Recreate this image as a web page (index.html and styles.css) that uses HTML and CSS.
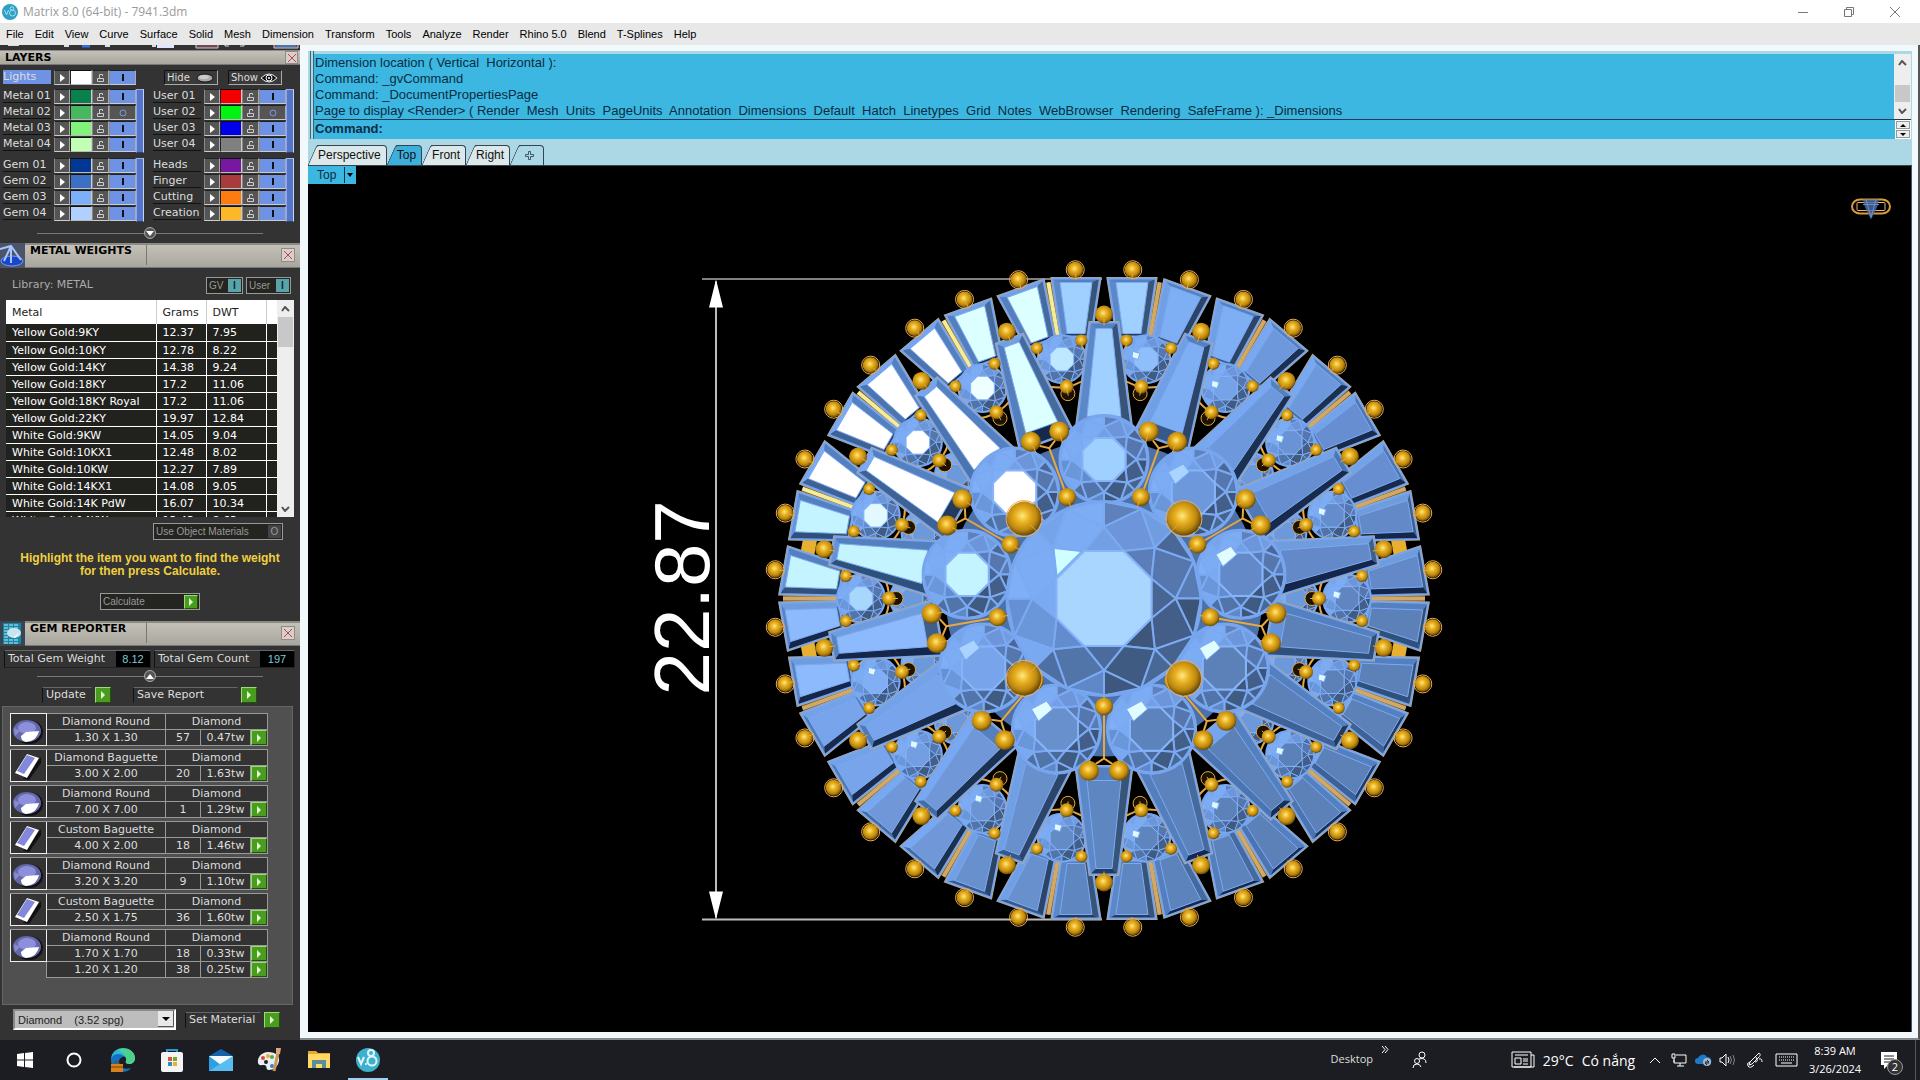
FILE: index.html
```html
<!doctype html>
<html lang="en">
  <head>
    <meta charset="UTF-8" />
    <meta name="viewport" content="width=device-width, initial-scale=1.0" />
    <title>Matrix 8.0 (64-bit) - 7941.3dm</title>
    <link rel="stylesheet" href="styles.css">
  </head>
  <body>
    <header class="titlebar">
      <svg class="app-icon" viewBox="0 0 16 16"><circle cx="8" cy="8" r="8" fill="#2f9fc4"/><circle cx="10.5" cy="9" r="3" fill="none" stroke="#9fe0f2"/><circle cx="10" cy="4.5" r="1.8" fill="none" stroke="#9fe0f2"/><path d="M2.5 6l2 5 2-5" fill="none" stroke="#9fe0f2"/></svg>
      <span class="title">Matrix 8.0 (64-bit) - 7941.3dm</span>
      <div class="window-buttons">
        <button aria-label="Minimize"><svg width="12" height="12"><path d="M1 6.500h10"/></svg></button>
        <button aria-label="Restore"><svg width="12" height="12"><path d="M1.500 3.500h7v7h-7zM3.500 3.500v-2h7v7h-2"/></svg></button>
        <button aria-label="Close"><svg width="12" height="12"><path d="M1 1l10 10M11 1L1 11"/></svg></button>
      </div>
    </header>

    <nav class="menubar">
      <button>File</button><button>Edit</button><button>View</button><button>Curve</button><button>Surface</button><button>Solid</button><button>Mesh</button><button>Dimension</button><button>Transform</button><button>Tools</button><button>Analyze</button><button>Render</button><button>Rhino 5.0</button><button>Blend</button><button>T-Splines</button><button>Help</button>
    </nav>

    <div class="workspace">
      <aside class="dock">
        <svg class="dock-strip" width="300" height="5"><path d="M8 0h11M64 1h5M105 1h5M152 1h4" stroke="#ddd" stroke-width="2"/><path d="M82 1h8" stroke="#3a6ae0" stroke-width="3"/><path d="M157 0h17v3h-17z" fill="#dfe6ff"/><path d="M196 0v3h22V0M274 0v3h24V0" fill="#704858" stroke="#ccc"/><path d="M276 1h20" stroke="#3f78b8" stroke-width="2"/><path d="M225 0v1h4M240 1h4V0" stroke="#ddd" fill="none"/></svg>

        <section class="layers">
          <div class="panel-head slim">
            <h2>LAYERS</h2>
            <button class="close" aria-label="Close Layers"></button>
          </div>
          <div class="layers-top">
            <div class="layer-row" id="lights"></div>
            <button class="bevel-btn">Hide <svg width="18" height="10"><ellipse cx="9" cy="5" rx="8" ry="4" fill="#aaa" stroke="#111"/><ellipse cx="8" cy="4" rx="5" ry="2" fill="#ccc"/></svg></button>
            <button class="bevel-btn">Show <svg width="18" height="10"><path d="M1 5q8-8 16 0q-8 8-16 0z" fill="#111" stroke="#eee"/><circle cx="9" cy="5" r="3" fill="#111" stroke="#fff"/><circle cx="9" cy="5" r="1" fill="#fff"/></svg></button>
          </div>
          <div class="layer-grid" id="layerGrid"></div>
          <div class="slider"><button aria-label="Expand layers"><svg width="8" height="5"><path d="M0 0h8l-4 5z" fill="#fff"/></svg></button></div>
        </section>

        <section class="metal">
          <div class="panel-head">
            <svg class="head-icon" width="25" height="25"><rect width="25" height="25" fill="#4b5468"/><ellipse cx="12" cy="18" rx="11" ry="5" fill="#1c46c8" stroke="#6f9cff"/><path d="M0 6l11-3 10 14M11 3L4 18M11 3v17" fill="none" stroke="#a8c4ff" stroke-width="2"/></svg>
            <h2>METAL WEIGHTS</h2>
            <button class="close" aria-label="Close Metal Weights"></button>
          </div>
          <div class="library">
            <span>Library: METAL</span>
            <button class="switch">GV <i>I</i></button>
            <button class="switch">User <i>I</i></button>
          </div>
          <div class="metal-list">
            <table>
              <thead><tr><th>Metal</th><th>Grams</th><th>DWT</th><th></th></tr></thead>
              <tbody id="metals"></tbody>
            </table>
            <div class="scrollbar">
              <button aria-label="Scroll up"><svg width="9" height="6"><path d="M1 5l3-4 4 4"/></svg></button>
              <div class="thumb"></div>
              <button aria-label="Scroll down"><svg width="9" height="6"><path d="M1 1l3 4 4-4"/></svg></button>
            </div>
          </div>
          <button class="switch off use-materials">Use Object Materials <i>O</i></button>
          <p class="hint">Highlight the item you want to find the weight<br>for then press Calculate.</p>
          <button class="switch calc">Calculate <span class="go"></span></button>
        </section>

        <section class="gems">
          <div class="panel-head">
            <svg class="head-icon" width="25" height="25"><rect width="25" height="25" fill="#3c4450"/><rect x="3" y="2" width="18" height="21" fill="#1787a8"/><path d="M4 4h15M4 7h15M4 10h5M4 13h4M4 16h5M4 19h15M4 22h15" stroke="#bdeef8" stroke-dasharray="4 1"/><ellipse cx="14" cy="12" rx="7" ry="5" fill="#c8e4f0"/><path d="M8 12l6 4 6-5-5 6z" fill="#fff"/></svg>
            <h2>GEM REPORTER</h2>
            <button class="close" aria-label="Close Gem Reporter"></button>
          </div>
          <div class="totals">
            <div><span>Total Gem Weight</span><output>8.12</output></div>
            <div><span>Total Gem Count</span><output>197</output></div>
          </div>
          <div class="slider"><button aria-label="Collapse report"><svg width="8" height="5"><path d="M0 5h8l-4-5z" fill="#fff"/></svg></button></div>
          <div class="report-actions">
            <button class="action update"><span>Update</span><span class="go"></span></button>
            <button class="action save"><span>Save Report</span><span class="go"></span></button>
          </div>
          <div class="gem-list"><table id="gems"></table></div>
          <div class="material">
            <div class="select-wrap">
              <select aria-label="Material"><option>Diamond &nbsp;&nbsp; (3.52 spg)</option></select>
              <svg class="select-arrow" width="16" height="16"><rect x="0" y="0" width="16" height="16" fill="#e8e8e8"/><path d="M15.500 0v15.500H0" fill="none" stroke="#555"/><path d="M4 6h8l-4 4z" fill="#000"/></svg>
            </div>
            <button class="action"><span>Set Material</span><span class="go"></span></button>
          </div>
        </section>
      </aside>

      <main class="stage">
        <div class="command">
          <div class="history">
            <div class="log">
              <p>Dimension location ( Vertical&nbsp; Horizontal ):</p>
              <p>Command: _gvCommand</p>
              <p>Command: _DocumentPropertiesPage</p>
              <p>Page to display &lt;Render&gt; ( Render&nbsp; Mesh&nbsp; Units&nbsp; PageUnits&nbsp; Annotation&nbsp; Dimensions&nbsp; Default&nbsp; Hatch&nbsp; Linetypes&nbsp; Grid&nbsp; Notes&nbsp; WebBrowser&nbsp; Rendering&nbsp; SafeFrame ): _Dimensions</p>
            </div>
            <div class="scrollbar">
              <button aria-label="Scroll up"><svg width="9" height="6"><path d="M1 5l3-4 4 4"/></svg></button>
              <div class="thumb"></div>
              <button aria-label="Scroll down"><svg width="9" height="6"><path d="M1 1l3 4 4-4"/></svg></button>
            </div>
          </div>
          <div class="prompt">
            <label for="cmd">Command:</label>
            <input id="cmd" type="text" autocomplete="off">
            <div class="spin">
              <button aria-label="Previous"><svg width="6" height="3"><path d="M0 3h6l-3-3z"/></svg></button>
              <button aria-label="Next"><svg width="6" height="3"><path d="M0 0h6l-3 3z"/></svg></button>
            </div>
          </div>
        </div>

        <div class="tabs">
          <button class="tab">Perspective</button>
          <button class="tab active">Top</button>
          <button class="tab">Front</button>
          <button class="tab">Right</button>
          <button class="tab add" aria-label="New viewport"><svg width="9" height="9"><path d="M3.500.500h2v3h3v2h-3v3h-2v-3h-3v-2h3z" fill="none" stroke="#3c5a68"/></svg></button>
        </div>

        <div class="viewport">
          <svg id="scene" viewBox="308 167 1603 865"></svg>
          <button class="view-name">Top <svg width="6" height="4"><path d="M0 0h6l-3 4z"/></svg></button>
        </div>
      </main>
    </div>

    <footer class="taskbar">
      <button aria-label="Start"><svg width="16" height="16" fill="#fff"><path d="M0 2l7-1v6.500H0zM8 1l8-1v7.500H8zM0 8.500h7V15l-7-1zM8 8.500h8V16l-8-1z"/></svg></button>
      <button aria-label="Search"><svg width="16" height="16"><circle cx="8" cy="8" r="6.500" fill="none" stroke="#fff" stroke-width="2"/></svg></button>
      <button aria-label="Edge"><svg width="26" height="26"><path d="M1 13C1 5 7 1 13 1c7 0 12 5 12 10 0 4-3 6-6 6-2 0-4-1-3-3 1-3-1-5-4-5-5 0-8 3-8 8z" fill="#2fb7d8"/><path d="M8 3c8-4 17 1 17 8 0 4-3 6-6 6-2 0-4-1-3-3 1-5-2-8-8-11z" fill="#4fd08a"/><path d="M1 13c0-3 3-6 7-6 3 0 5 1 6 3-3 0-5 2-5 5 0 5 5 8 12 6-2 3-6 4-9 4C5 25 1 20 1 13z" fill="#1670c0"/><rect x="1" y="17" width="12" height="8" fill="#d8821c"/><path d="M5 17v-2h4v2M1 20h12" stroke="#7a3f08" fill="none"/></svg></button>
      <button aria-label="Store"><svg width="24" height="24"><path d="M7 6V2h10v4" fill="none" stroke="#2c9ad0" stroke-width="2"/><rect x="1" y="4" width="22" height="20" rx="2" fill="#f4f4f4"/><path d="M8 9h4v4H8z" fill="#e0562c"/><path d="M13 9h4v4h-4z" fill="#6fae2c"/><path d="M8 14h4v4H8z" fill="#2c8cc8"/><path d="M13 14h4v4h-4z" fill="#e8b02c"/></svg></button>
      <button aria-label="Mail"><svg width="26" height="24"><path d="M1 8l12-7 12 7v15H1z" fill="#1463a8"/><path d="M1 8h24v15H1z" fill="#2f9fe4"/><path d="M1 8h24l-12 9z" fill="#f4fafe"/><path d="M1 23L25 8v15z" fill="#58bdf0"/></svg></button>
      <button aria-label="Paint"><svg width="26" height="24"><path d="M11 4c8 0 12 4 11 9-1 6-6 9-10 9-4 0-1-5-5-5-3 0-5 1-6-2C0 9 5 4 11 4z" fill="#e8eef2"/><circle cx="6" cy="10" r="2" fill="#d8483c"/><circle cx="11" cy="8" r="2" fill="#e8b02c"/><circle cx="15" cy="9" r="2" fill="#58a848"/><circle cx="15" cy="18" r="2" fill="#3c78d8"/><circle cx="9" cy="14" r="2" fill="#222"/><path d="M21 5l-4 18" stroke="#c89858" stroke-width="3"/><path d="M19 0h5l-1 6h-4z" fill="#d8a878"/></svg></button>
      <button aria-label="File Explorer"><svg width="24" height="20"><path d="M1 1h8l2 2h12v15H1z" fill="#e8a828"/><path d="M1 4h22v14H1z" fill="#ffd868"/><path d="M5 18v-8h14v8h-4v-4H9v4z" fill="#5a8f98"/></svg></button>
      <button class="running" aria-label="Matrix"><svg width="24" height="24"><circle cx="12" cy="12" r="12" fill="#3cb0cc"/><g fill="none" stroke="#dff6fb" stroke-width="2"><path d="M2 9l3 7 3-7"/><circle cx="16" cy="13" r="4.500"/><circle cx="15" cy="5" r="3"/></g><circle cx="10" cy="16" r="1" fill="#fff"/></svg></button>

      <div class="tray">
        <span class="desktop">Desktop</span>
        <button class="more" aria-label="Show toolbar"><svg width="8" height="7"><path d="M1 0l3 3.500L1 7M4 0l3 3.500L4 7"/></svg></button>
        <button class="people" aria-label="People"><svg width="16" height="18"><circle cx="10" cy="4" r="3"/><circle cx="5" cy="10" r="2.500"/><path d="M1 17q0-4 4-4 3 0 4 3M7 8q7-2 7 4"/></svg></button>
        <button class="weather"><svg width="24" height="18"><path d="M1 1h19v15H1zM20 4h3v12H3M4 4h13M4 7h6v6H4zM12 8h5M12 10h5M12 13h5"/></svg><span>29°C</span><span>Có nắng</span></button>
        <button class="t24" aria-label="Hidden icons"><svg width="12" height="8"><path d="M1 7l5-5 5 5"/></svg></button>
        <button class="t24" aria-label="Network"><svg width="16" height="14"><path d="M5 2h10v8H3V7M9 10v3M6 13h7M1 1h3v4H1zM3 5v4"/></svg></button>
        <button class="t24" aria-label="OneDrive"><svg width="17" height="14"><path d="M3 11a3 3 0 0 1 0-6A5 5 0 0 1 12 4a4 4 0 0 1 3 7z" fill="#1f78c8" stroke="none"/><circle cx="12" cy="9" r="4" fill="#9fb8c8" stroke="none"/><path d="M10 9h4l-2-2M14 10h-4l2 2" stroke="#223"/></svg></button>
        <button class="t24" aria-label="Volume"><svg width="17" height="14"><path d="M1 5h2l4-4v12L3 9H1zM9 4q2 3 0 6"/><path d="M11 3q3 4 0 8M14 2q3 5 0 10" stroke="#888"/></svg></button>
        <button class="pen" aria-label="Pen"><svg width="17" height="16"><path d="M13 1c2 1 1 3 0 4L6 12l-3 1 1-3zL4 10M4 10q-4 1-2 4t6-1M10 5q3 5-1 5M13 7q3-1 3 3"/></svg></button>
        <button class="keys" aria-label="Touch keyboard"><svg width="23" height="14"><path d="M1 1h21v12H1z"/><path d="M4 4h16M4 7h16" stroke-dasharray="1 1"/><path d="M6 10h11"/></svg></button>
        <button class="clock"><span>8:39 AM</span><span>3/26/2024</span></button>
        <button class="notify" aria-label="Notifications"><svg width="17" height="17"><path d="M0 0h16v13H7l-4 4v-4H0z" fill="#fff" stroke="none"/><path d="M3 4h10M3 7h10M3 10h6" stroke="#1c1d22"/></svg><span class="badge">2</span></button>
      </div>
    </footer>
    <script src="app.js"></script>
  </body>
</html>
```
FILE: styles.css
```css
* {
  box-sizing: border-box;
}

body {
  margin: 0;
  height: 100vh;
  display: flex;
  flex-direction: column;
  overflow: hidden;
  font-family: "DejaVu Sans", Verdana, sans-serif;
  font-size: 11px;
  color: #ddd;
  background: #1c1d22;
}

button, input, select {
  font: inherit;
  color: inherit;
  margin: 0;
  padding: 0;
  border: none;
  background: none;
}

h2, p {
  margin: 0;
}

svg {
  display: block;
  flex-shrink: 0;
}

/* title + menu */
.titlebar {
  height: 23px;
  display: flex;
  align-items: center;
  padding: 0 2px;
  background: #fff;
  color: #999;
  font-family: "Open Sans", "Segoe UI", sans-serif;
}

.app-icon {
  width: 16px;
  height: 16px;
}

.title {
  flex: 1;
  margin-left: 5px;
  font-size: 12px;
}

.window-buttons {
  display: flex;
}

.window-buttons button {
  width: 46px;
  height: 21px;
  display: flex;
  align-items: center;
  justify-content: center;
}

.window-buttons svg {
  stroke: #777;
  fill: none;
}

.menubar {
  height: 22px;
  display: flex;
  align-items: center;
  padding-left: 1px;
  background: #e8e8e8;
  color: #000;
  font-family: "Liberation Sans", Arial, sans-serif;
}

.menubar button {
  padding: 0 6px 0 5px;
}

.workspace {
  flex: 1;
  min-height: 0;
  display: flex;
}

/* left dock */
.dock {
  width: 300px;
  flex-shrink: 0;
  display: flex;
  flex-direction: column;
  background: #333;
  overflow: hidden;
}

.panel-head {
  height: 25px;
  display: flex;
  align-items: flex-start;
  position: relative;
  background: linear-gradient(#c4c1b8, #a9a69e);
  border-top: 2px solid #8c8a84;
  border-bottom: 1px solid #777;
}

.panel-head .head-icon {
  margin-top: -2px;
}

.panel-head h2 {
  width: 122px;
  height: 20px;
  padding-left: 5px;
  line-height: 12px;
  font-size: 11px;
  color: #000;
  border-right: 1px solid #777;
  white-space: nowrap;
}

.panel-head.slim {
  height: 15px;
  border-top-width: 1px;
}

.panel-head.slim h2 {
  border: none;
  line-height: 14px;
}

.close {
  width: 14px;
  height: 14px;
  margin: 3px 5px 0 auto;
  border: 1px solid #8f8b88;
  background:
    linear-gradient(45deg, transparent 46%, #b44 46%, #b44 54%, transparent 54%) center / 8px 8px no-repeat,
    linear-gradient(-45deg, transparent 46%, #b44 46%, #b44 54%, transparent 54%) center / 8px 8px no-repeat,
    #d8cfcc;
}

.slim .close {
  width: 13px;
  height: 13px;
  margin: 0 2px 0 auto;
}

.layers-top {
  display: flex;
  padding: 5px 0 0 3px;
  height: 24px;
}

.layers-top .layer-row {
  margin-right: 28px;
}

#lights .layer-name {
  background: #6f93e4;
  border: none;
}

.bevel-btn {
  width: 54px;
  height: 15px;
  margin-right: 10px;
  display: flex;
  align-items: center;
  justify-content: space-between;
  padding: 0 3px 0 2px;
  font-size: 10px;
  background: #3a3a3a;
  border: 1px solid;
  border-color: #111 #aaa #aaa #111;
}

.layer-grid {
  display: grid;
  grid-template-columns: 141px 141px;
  gap: 5px 9px;
  padding-left: 3px;
}

.layer-group {
  display: flex;
  justify-content: space-between;
  height: 64px;
}

.layer-group::after {
  content: "";
  width: 6px;
  background: #5576c8;
  border: 1px solid;
  border-color: #9bb4f0 #c8d4f4 #2c407c #8ca8f0;
}

.layer-row {
  display: flex;
  height: 16px;
}

.layer-name {
  width: 48px;
  height: 14px;
  margin-right: 3px;
  line-height: 14px;
  border-bottom: 1px solid #111;
  white-space: nowrap;
}

.layer-row button {
  height: 15px;
  display: flex;
  align-items: center;
  justify-content: center;
  background: #555;
  border: 1px solid;
  border-color: #222 #aaa #ccc #888;
}

.layer-row .arrow {
  width: 16px;
}

.layer-row .swatch {
  width: 22px;
  border-color: #111 #ccc #bbb #222;
}

.layer-row .lock {
  width: 17px;
}

.layer-row .onoff {
  width: 27px;
  background: #6f93e4;
}

.layer-row .onoff.off {
  background: #555;
}

.slider {
  height: 12px;
  margin: 0 37px;
  display: flex;
  justify-content: center;
  background: linear-gradient(#777, #777) center / 100% 1px no-repeat;
}

.layers .slider {
  margin-top: 5px;
  margin-bottom: 4px;
}

.slider button {
  width: 12px;
  height: 12px;
  display: flex;
  align-items: center;
  justify-content: center;
  border: 1px solid #aaa;
  border-radius: 50%;
  background: #555;
}

/* metal weights */
.library {
  display: flex;
  margin: 9px 9px 6px 12px;
  height: 17px;
  color: #aaa;
}

.library > span {
  flex: 1;
  line-height: 15px;
}

.switch {
  height: 17px;
  display: flex;
  align-items: center;
  justify-content: space-between;
  padding: 0 1px 0 2px;
  font-family: "Liberation Sans", Arial, sans-serif;
  font-size: 10px;
  color: #999;
  background: #242420;
  border: 1px solid #999;
}

.switch i {
  width: 13px;
  height: 13px;
  line-height: 13px;
  font-style: normal;
  font-weight: bold;
  color: #10282c;
  background: #58a4a8;
}

.switch.off i {
  color: #999;
  background: #444;
  font-weight: normal;
}

.library .switch {
  width: 37px;
}

.library .switch + .switch {
  width: 45px;
  margin-left: 3px;
}

.metal-list {
  height: 217px;
  margin: 0 6px;
  display: flex;
  overflow: hidden;
  background: #21211e;
}

.metal-list table {
  flex: 1;
  height: max-content;
  table-layout: fixed;
  border-collapse: collapse;
  color: #fff;
}

.metal-list th {
  height: 24px;
  background: #fff;
  color: #222;
  font-weight: normal;
  text-align: left;
  border-right: 1px solid #ccc;
}

.metal-list th:nth-child(1) { width: 150px; }
.metal-list th:nth-child(2) { width: 50px; }
.metal-list th:nth-child(3) { width: 60px; }
.metal-list th:last-child { border: none; }

.metal-list td {
  height: 17px;
  border-bottom: 1px solid #fff;
  border-right: 1px solid #fff;
}

.metal-list th,
.metal-list td {
  padding: 1px 0 0 6px;
  white-space: nowrap;
}

.metal-list td:last-child {
  border-right: none;
}

.scrollbar {
  width: 17px;
  display: flex;
  flex-direction: column;
  background: #eee;
}

.scrollbar button {
  height: 17px;
  display: flex;
  align-items: center;
  justify-content: center;
}

.scrollbar button:last-child {
  margin-top: auto;
}

.scrollbar svg {
  fill: none;
  stroke: #555;
  stroke-width: 2;
}

.scrollbar .thumb {
  height: 30px;
  margin: 0 1px;
  background: #c8c8c8;
}

.use-materials {
  width: 130px;
  margin: 6px 0 0 153px;
}

.hint {
  margin: 12px 0 15px;
  text-align: center;
  line-height: 13px;
  font-family: "Liberation Sans", Arial, sans-serif;
  font-size: 12px;
  font-weight: bold;
  color: #f0d040;
}

.calc {
  width: 100px;
  margin: 0 0 11px 100px;
}

.go {
  width: 16px;
  height: 16px;
  background: #4a9c20;
  border: 1px solid;
  border-color: #9cdc78 #24500c #24500c #9cdc78;
  display: flex;
  align-items: center;
  justify-content: center;
}

.go::after {
  content: "";
  border-left: 4px solid #dfffc8;
  border-top: 4px solid transparent;
  border-bottom: 4px solid transparent;
}

.calc .go {
  width: 14px;
  height: 14px;
}

/* gem reporter */
.gems {
  flex: 1;
  display: flex;
  flex-direction: column;
}

.totals {
  display: flex;
  gap: 3px;
  padding: 4px 5px 2px 4px;
  height: 24px;
}

.totals div {
  flex: 1;
  display: flex;
  line-height: 16px;
  border: 1px solid;
  border-color: #666 #222 #222 #111;
  white-space: nowrap;
}

.totals div:first-child {
  flex: none;
  width: 147px;
}

.totals span {
  flex: 1;
  padding-left: 3px;
}

.totals output {
  width: 34px;
  text-align: center;
  color: #7cc8d8;
  background: #000;
  font-family: "Liberation Sans", Arial, sans-serif;
}

.report-actions {
  display: flex;
  gap: 22px;
  padding: 5px 0 3px 42px;
}

.action {
  height: 16px;
  display: flex;
  justify-content: space-between;
  line-height: 14px;
  gap: 3px;
}

.action > span:first-child {
  flex: 1;
  text-align: left;
  padding-left: 3px;
  border: 1px solid;
  border-color: #666 #333 #333 #111;
  white-space: nowrap;
}

.update { width: 69px; }
.save { width: 124px; }

.gem-list {
  flex: 1;
  margin: 0 7px 0 2px;
  padding: 6px 7px 0;
  background: #505050;
  border: 1px solid #666;
}

.gem-list table {
  border-collapse: collapse;
  table-layout: fixed;
  width: 257px;
  line-height: 14px;
  text-align: center;
}

.gem-list td {
  padding: 0;
  height: 16px;
  border: 1px solid #999;
  background: #333;
}

.gem-list .go {
  height: 15px;
}

.gem-list .gap td {
  height: 4px;
  line-height: 0;
  background: none;
  border-width: 1px 0;
}

.gem-list .thumb-cell {
  border: 1px solid #eee;
}

.gem-list .bare {
  background: none;
  border: none;
}

.material {
  display: flex;
  align-items: center;
  gap: 9px;
  height: 35px;
  padding: 0 0 6px 13px;
}

.select-wrap {
  position: relative;
  width: 163px;
  height: 21px;
}

.select-wrap select {
  appearance: none;
  width: 100%;
  height: 21px;
  padding-left: 3px;
  color: #222;
  background: #bdbdbd;
  border: 2px solid;
  border-color: #888 #fff #fff #888;
  font-family: "Liberation Sans", Arial, sans-serif;
}

.select-arrow {
  position: absolute;
  right: 2px;
  top: 2px;
  pointer-events: none;
}

.material .action {
  width: 95px;
}

/* command area and viewport */
.stage {
  flex: 1;
  min-width: 0;
  display: flex;
  flex-direction: column;
  padding: 6px 6px 6px 8px;
  background: #f2f9fd;
  border-right: 2px solid #555;
  border-bottom: 2px solid #888;
}

.command {
  padding: 3px 1px 0 6px;
  background: linear-gradient(90deg, transparent 2px, #3c6478 2px, #3c6478 3px, transparent 3px, transparent 5px, #3c6478 5px, #3c6478 6px, transparent 6px) #acd8e6;
  color: #0c2c40;
  font-family: "Liberation Sans", Arial, sans-serif;
  font-size: 13px;
}

.history {
  display: flex;
  height: 66px;
  background: #3bb7e2;
  border-bottom: 1px solid #1c3c50;
}

.log {
  flex: 1;
  min-width: 0;
  padding: 1px 0 0 1px;
  line-height: 16px;
}

.log p {
  white-space: nowrap;
}

.history .thumb {
  height: 17px;
  margin-top: 14px;
}

.prompt {
  display: flex;
  height: 19px;
  background: #3bb7e2;
}

.prompt label {
  padding-left: 1px;
  line-height: 17px;
  font-weight: bold;
}

.prompt input {
  flex: 1;
  padding-left: 4px;
}

.spin {
  width: 16px;
  background: #fff;
  padding: 1px;
}

.spin button {
  display: flex;
  align-items: center;
  justify-content: center;
  width: 100%;
  height: 8px;
  margin-bottom: 1px;
  background: #eee;
  border: 1px solid #999;
}

.tabs {
  display: flex;
  align-items: flex-end;
  height: 27px;
  background: #acd8e6;
  border-bottom: 1px solid #345;
  color: #111;
  font-family: "Liberation Sans", Arial, sans-serif;
  font-size: 12px;
}

.tab {
  position: relative;
  z-index: 0;
  height: 20px;
  margin-left: 9px;
  padding: 0 5px 2px 1px;
  background: #dce8ea;
  border-top: 1px solid #345;
  border-right: 1px solid #345;
  border-radius: 0 4px 0 0;
}

.tab::before {
  content: "";
  position: absolute;
  z-index: -1;
  left: -5px;
  top: -1px;
  bottom: 0;
  width: 12px;
  background: inherit;
  border-left: 1px solid #345;
  border-top: 1px solid #345;
  border-top-left-radius: 3px;
  transform: skewX(-24deg);
}

.tab.active {
  background: #3cb0dc;
}

.tab.add {
  background: #acd8e6;
  padding: 0 9px 0 6px;
}

.viewport {
  position: relative;
  flex: 1;
  min-height: 0;
  background: #000;
  border-right: 1px solid #456;
}

#scene {
  width: 100%;
  height: 100%;
}

.view-name {
  position: absolute;
  left: 0;
  top: 0;
  display: flex;
  align-items: center;
  height: 18px;
  padding: 0 2px 0 9px;
  gap: 8px;
  background: #3bb7e2;
  color: #0c2c40;
  font-family: "Liberation Sans", Arial, sans-serif;
  font-size: 12px;
}

.view-name svg {
  height: 16px;
  padding: 6px 0 0 2px;
  width: 10px;
  border-left: 1px solid #0c2c40;
}

/* taskbar */
.taskbar {
  height: 40px;
  display: flex;
  background: #1c1d22;
  color: #fff;
  font-family: "Open Sans", "Segoe UI", sans-serif;
}

.taskbar button {
  width: 49px;
  display: flex;
  align-items: center;
  justify-content: center;
}

.taskbar .running {
  background: linear-gradient(#9fd0f0, #9fd0f0) center bottom / 40px 2px no-repeat;
}

.tray {
  margin-left: auto;
  display: flex;
  padding-right: 4px;
  border-right: 1px solid #555;
  margin-right: 4px;
}

.tray svg {
  fill: none;
  stroke: #fff;
}

.desktop {
  line-height: 38px;
  padding: 0 4px;
  color: #ddd;
}

.tray .more {
  width: 16px;
  align-items: flex-start;
  padding-top: 6px;
}

.tray .people {
  width: 54px;
  margin-right: 56px;
}

.tray .weather {
  width: 140px;
  gap: 8px;
  font-size: 14px;
  white-space: nowrap;
}

.tray .t24 { width: 24px; }
.tray .pen { width: 30px; }
.tray .keys { width: 34px; }

.tray .clock {
  width: 64px;
  flex-direction: column;
  line-height: 18px;
}

.tray .notify {
  width: 44px;
  position: relative;
}

.badge {
  position: absolute;
  left: 20px;
  top: 19px;
  width: 16px;
  height: 16px;
  border-radius: 50%;
  border: 1px solid #999;
  background: #333;
  line-height: 14px;
}
```
FILE: app.js
```js
// ---- panels ----
const lock = '<svg width="9" height="10"><path d="M1.500 5.500h6v3h-6zM3.500 5V1.500h3V3" fill="none" stroke="#ccc"/></svg>';

function layerRow([name, color, off]) {
  return `<span class="layer-name">${name}</span>
    <button class="arrow" aria-label="Select ${name}"><svg width="5" height="8"><path d="M0 0l5 4-5 4z" fill="#fff"/></svg></button>
    <button class="swatch" aria-label="${name} color" style="background:${color}"></button>
    <button class="lock" aria-label="Lock ${name}">${lock}</button>
    <button class="onoff${off ? ' off' : ''}" aria-label="Toggle ${name}">${off
      ? '<svg width="8" height="8"><circle cx="4" cy="4" r="3" fill="none" stroke="#7c9cd8"/></svg>'
      : '<svg width="2" height="7"><path d="M0 0h2v7H0z" fill="#111"/></svg>'}</button>`;
}

const groups = [
  [['Metal 01', '#08814c'], ['Metal 02', '#48b860', 1], ['Metal 03', '#80f478'], ['Metal 04', '#c0ffb4']],
  [['User 01', '#f40000'], ['User 02', '#00f410', 1], ['User 03', '#0000e8'], ['User 04', '#808080']],
  [['Gem 01', '#003894'], ['Gem 02', '#3c70c4'], ['Gem 03', '#7cb0f8'], ['Gem 04', '#b0d0ff']],
  [['Heads', '#7818a0'], ['Finger', '#a83c3c'], ['Cutting', '#fc7c10'], ['Creation', '#fcb828']],
];

document.getElementById('lights').innerHTML = layerRow(['Lights', '#fff']);
document.getElementById('layerGrid').innerHTML = groups.map(g =>
  `<div class="layer-group"><div>${g.map(r => `<div class="layer-row">${layerRow(r)}</div>`).join('')}</div></div>`
).join('');

const metals = [
  ['Yellow Gold:9KY', '12.37', '7.95'],
  ['Yellow Gold:10KY', '12.78', '8.22'],
  ['Yellow Gold:14KY', '14.38', '9.24'],
  ['Yellow Gold:18KY', '17.2', '11.06'],
  ['Yellow Gold:18KY Royal', '17.2', '11.06'],
  ['Yellow Gold:22KY', '19.97', '12.84'],
  ['White Gold:9KW', '14.05', '9.04'],
  ['White Gold:10KX1', '12.48', '8.02'],
  ['White Gold:10KW', '12.27', '7.89'],
  ['White Gold:14KX1', '14.08', '9.05'],
  ['White Gold:14K PdW', '16.07', '10.34'],
  ['White Gold:14KW', '13.43', '8.63'],
];
document.getElementById('metals').innerHTML = metals.map(m =>
  `<tr>${m.map(c => `<td>${c}</td>`).join('')}<td></td></tr>`).join('');

const roundIcon = '<svg width="34" height="30"><ellipse cx="18" cy="17" rx="14" ry="12" fill="#111"/><ellipse cx="16" cy="16" rx="14" ry="11" fill="#6468a8"/><ellipse cx="16" cy="13" rx="9" ry="6" fill="#8c90dc"/><path d="M10 21l5-4 13-1q-2 10-13 11-5-1-5-6z" fill="#fff"/><path d="M3 13l6 3-5 5z" fill="#888cd0"/></svg>';
const baguetteIcon = '<svg width="34" height="30"><path d="M12 28L30 6v6L18 29z" fill="#111"/><path d="M16 3l12 4-12 20-12-5z" fill="#fff"/><path d="M16 4l8 3-11 16-7-3z" fill="#8488dc"/></svg>';
const gems = [
  ['Diamond Round', ['1.30 X 1.30', 57, '0.47tw']],
  ['Diamond Baguette', ['3.00 X 2.00', 20, '1.63tw']],
  ['Diamond Round', ['7.00 X 7.00', 1, '1.29tw']],
  ['Custom Baguette', ['4.00 X 2.00', 18, '1.46tw']],
  ['Diamond Round', ['3.20 X 3.20', 9, '1.10tw']],
  ['Custom Baguette', ['2.50 X 1.75', 36, '1.60tw']],
  ['Diamond Round', ['1.70 X 1.70', 18, '0.33tw'], ['1.20 X 1.20', 38, '0.25tw']],
];
const go = '<button class="go" aria-label="Select gems"></button>';
document.getElementById('gems').innerHTML =
  '<colgroup><col style="width:36px"><col style="width:119px"><col style="width:35px"><col style="width:50px"><col style="width:17px"></colgroup>' +
  gems.map(([name, ...rows]) => `
    <tr><td class="thumb-cell" rowspan="2">${name.includes('Round') ? roundIcon : baguetteIcon}</td><td>${name}</td><td colspan="3">Diamond</td></tr>
    ${rows.map((r, i) => `<tr>${i ? '<td class="bare"></td>' : ''}${r.map(c => `<td>${c}</td>`).join('')}<td>${go}</td></tr>`).join('')}
  `).join('<tr class="gap"><td colspan="5"></td></tr>');

// ---- viewport drawing ----
const CX = 1104, CY = 599;
const rad = d => d * Math.PI / 180;
// 0deg points up, angles run clockwise
const polar = (r, a, x = CX, y = CY) => [x + r * Math.sin(rad(a)), y - r * Math.cos(rad(a))];
const f = p => p.map(v => v.toFixed(1)).join(',');
const poly = (pts, fill, stroke = '#7caaf2', w = 1) =>
  `<polygon points="${pts.map(f).join(' ')}" fill="${fill}" stroke="${stroke}" stroke-width="${w}" stroke-linejoin="round"/>`;

function ramp(stops, a) {
  a = ((a % 360) + 360) % 360;
  let i = stops.findIndex(s => s[0] > a);
  if (i < 0) i = stops.length - 1;
  const [a0, c0] = stops[i - 1], [a1, c1] = stops[i];
  const t = (a - a0) / (a1 - a0);
  const ch = n => [1, 3, 5].map(k => parseInt(n.slice(k, k + 2), 16));
  const p = ch(c0), q = ch(c1);
  return `rgb(${p.map((v, k) => Math.round(v + (q[k] - v) * t)).join(',')})`;
}

// colour of a flat table by the side of the ring it sits on
const tableRamp = [[0, '#a0d0ff'], [20, '#7eaef4'], [40, '#6d98dc'], [60, '#668ed0'], [80, '#6389c8'], [100, '#5c80b8'],
  [140, '#5c80b8'], [180, '#5e86c0'], [200, '#6890cc'], [220, '#7098d8'], [240, '#78a4ec'], [260, '#8cbafc'],
  [280, '#c4f4ff'], [300, '#ffffff'], [320, '#ffffff'], [340, '#dcffff'], [360, '#a0d0ff']];
const bevelRamp = [[0, '#5580c0'], [50, '#5580c0'], [90, '#385478'], [110, '#2c4468'], [130, '#1c3050'], [170, '#14264a'],
  [190, '#30507c'], [230, '#4c74b0'], [270, '#5c88c8'], [300, '#7aaaf4'], [320, '#75a5ee'], [350, '#6f9cdc'], [360, '#5580c0']];
const facetRamp = [[0, '#78a8f0'], [45, '#6084c0'], [90, '#4c6a9c'], [135, '#3a5274'], [180, '#466490'],
  [225, '#5c84c4'], [270, '#78a8f0'], [315, '#80b0f8'], [360, '#78a8f0']];

// trapezoid stone: rOut/rIn along direction d, shifted sideways by off,
// bevel = [side inset outside, side inset inside, outer end, inner end]
function baguette(d, off, rOut, rIn, wOut, wIn, [bo, bi, eo, ei]) {
  const at = (x, y) => {
    const s = Math.sin(rad(d)), k = Math.cos(rad(d));
    return [CX + x * k + y * s, CY + x * s - y * k];
  };
  const o = [at(off - wOut, rOut), at(off + wOut, rOut), at(off + wIn, rIn), at(off - wIn, rIn)];
  const n = [at(off - wOut + bo, rOut - eo), at(off + wOut - bo, rOut - eo), at(off + wIn - bi, rIn + ei), at(off - wIn + bi, rIn + ei)];
  const side = i => poly([o[i], o[(i + 1) % 4], n[(i + 1) % 4], n[i]], ramp(bevelRamp, d + [0, 90, 180, 270][i]), 'none');
  return `<polygon points="${o.map(f).join(' ')}" fill="#5580c0" stroke="#c8a468" stroke-width="3"/>`
    + side(0) + side(1) + side(2) + side(3)
    + poly(n, ramp(tableRamp, d)) + poly(o, 'none', '#78a6ee', 2);
}

function brilliant(x, y, r, table, lw = 1) {
  let s = `<circle cx="${x}" cy="${y}" r="${r}" fill="#6c98dc"/>`;
  for (let i = 0; i < 8; i++) {
    const a = 45 * i;
    const t0 = polar(r * .53, a - 22.5, x, y), t1 = polar(r * .53, a + 22.5, x, y);
    const s0 = polar(r * .74, a, x, y), s1 = polar(r * .74, a + 45, x, y);
    const g0 = polar(r, a, x, y), g1 = polar(r, a + 22.5, x, y), g2 = polar(r, a + 45, x, y);
    s += poly([t0, t1, s0], ramp(facetRamp, a + 10), '#7caaf2', lw)
      + poly([t1, s0, g1, s1], ramp(facetRamp, a + 22), '#7caaf2', lw)
      + poly([s0, g0, g1], ramp(facetRamp, a + 50), '#7caaf2', lw)
      + poly([s1, g1, g2], ramp(facetRamp, a + 15), '#7caaf2', lw);
  }
  const oct = [...Array(8)].map((_, i) => polar(r * .53, 45 * i + 22.5, x, y));
  return s + poly(oct, table, '#86b4f8', lw) + `<circle cx="${x}" cy="${y}" r="${r}" fill="none" stroke="#78a6ee" stroke-width="${lw + 1}"/>`;
}

function ball(r, a, size, ring, toward = a + 180) {
  const [x, y] = polar(r, a);
  const e = polar(size + 2, toward, x, y);
  return (ring ? `<circle cx="${x}" cy="${y}" r="${size + 1}" fill="none" stroke="#f0ac50"/>` : '')
    + `<circle cx="${x}" cy="${y}" r="${size}" fill="url(#gold)"/>`
    + `<path d="M${f(polar(size / 2, toward, x, y))}L${f(e)}" stroke="#e8a840" stroke-width="1"/>`;
}

let out = `<defs><radialGradient id="gold" cx=".45" cy=".42" r=".6">
  <stop offset="0" stop-color="#ffe880"/><stop offset=".35" stop-color="#e8b020"/><stop offset=".7" stop-color="#bc8810"/><stop offset="1" stop-color="#604000"/>
  </radialGradient></defs>`;

// dimension
out += `<g stroke="#fff" stroke-width="1"><path d="M702 279.500H1102"/><path d="M716 282V918M702 920H1102" stroke="#bbb" stroke-width="2"/></g>
  <path d="M716 280l7 28h-14zM716 920l7-28h-14z" fill="#fff"/>
  <text transform="translate(709 696) rotate(-90)" font-family="Liberation Sans, Arial, sans-serif" font-size="78" fill="#fff">22.87</text>`;

const dirs = [...Array(18)].map((_, i) => i * 20);

// inner gallery stones showing between the mounts
out += `<circle cx="${CX}" cy="${CY}" r="158" fill="#4c70a8"/>`;
dirs.forEach(d => {
  const side = (d >= 40 && d <= 120) || (d >= 220 && d <= 300);
  if (side) {
    const [gx, gy] = polar(192, d + 10);
    out += brilliant(gx, gy, 22, '#6c98dc');
  }
  if (d === 80 || d === 100 || d === 260 || d === 280) {
    out += `<path d="M${f(polar(300, d - 2))}L${f(polar(300, d + 2))}" stroke="#e8b030" stroke-width="14"/>`;
  }
  out += `<path d="M${f(polar(262, d + 10))}L${f(polar(321, d + 10))}" stroke="#6a5020" stroke-width="9"/>`
    + `<path d="M${f(polar(262, d + 10))}L${f(polar(321, d + 10))}" stroke="${d > 260 ? '#f4ec98' : '#d0a868'}" stroke-width="4"/>`;
});

dirs.forEach(d => {
  [28, -28].forEach(off => { out += baguette(d, off, 320, 262, 24, 15, [8, 6, 4, 3]); });
});

dirs.forEach(d => {
  const a = d + 10;
  out += `<path d="M${f(polar(222, a - 6))}Q${f(polar(209, a))} ${f(polar(222, a + 6))}" fill="none" stroke="#e8a840" stroke-width="2"/>`;
  const [x, y] = polar(243, a);
  out += brilliant(x, y, 24, ramp(tableRamp, a));
  if (a < 260) {
    const [hx, hy] = polar(11, a < 180 ? 290 : 340, x, y);
    out += poly([[hx - 3, hy - 4], [hx + 4, hy - 2], [hx + 2, hy + 4], [hx - 4, hy + 2]], '#dffaff');
  }
});

dirs.forEach(d => { out += baguette(d, 0, 276, 168, 14, 28, [6, 11, 6, 14]); });

for (let i = 0; i < 9; i++) {
  const a = i * 40 + 20;
  // claw bridge between neighbouring stones
  out += `<path d="M${f(polar(168, a - 4))}L${f(polar(160, a))}L${f(polar(168, a + 4))}M${f(polar(160, a))}L${f(polar(112, a))}" fill="none" stroke="#e8a840" stroke-width="2"/>`;
}
for (let i = 0; i < 9; i++) {
  const d = i * 40;
  const [x, y] = polar(139, d);
  out += brilliant(x, y, 44, ramp(tableRamp, d), 2);
  if (d > 20 && d < 260) out += poly([[x - 25, y - 20], [x - 10, y - 28], [x - 4, y - 20], [x - 18, y - 8]], d > 60 && d < 220 ? '#e0fcff' : '#a8d4ff');
}

out += brilliant(CX, CY, 97, '#a8d6ff', 2);
out += poly([[1054, 549], [1081, 552], [1057, 576]], '#d0ffff');

dirs.forEach(d => {
  const [x, y] = polar(208, d + 10);
  out += ball(330, d + 5, 8, true) + ball(330, d - 5, 8, true) + ball(284, d, 9)
    + ball(259, d + 5, 6) + ball(259, d - 5, 6)
    + `<circle cx="${x}" cy="${y}" r="7" fill="#1c1200" stroke="#e8a840"/>`
    + ball(215, d + 10, 7);
});
for (let i = 0; i < 9; i++) {
  const a = i * 40 + 20;
  out += ball(173, a - 5, 10) + ball(173, a + 5, 10) + ball(108, a, 9);
}
[45, 135, 225, 315].forEach(a => { out += ball(113, a, 17, true); });

// small ring preview
out += `<g fill="none" stroke="#d89c3c" stroke-width="2"><rect x="1852" y="200" width="38" height="14" rx="8"/><rect x="1857" y="203" width="28" height="8" rx="1" stroke="#e8b868" stroke-width="1"/></g>
  <path d="M1863 200h16l-2 8-6 12-6-12z" fill="#4c6ca8" fill-opacity=".8"/><path d="M1866 200l5 18 5-18M1863 205h16" fill="none" stroke="#6c90c8"/>`;

document.getElementById('scene').innerHTML = out;
```
